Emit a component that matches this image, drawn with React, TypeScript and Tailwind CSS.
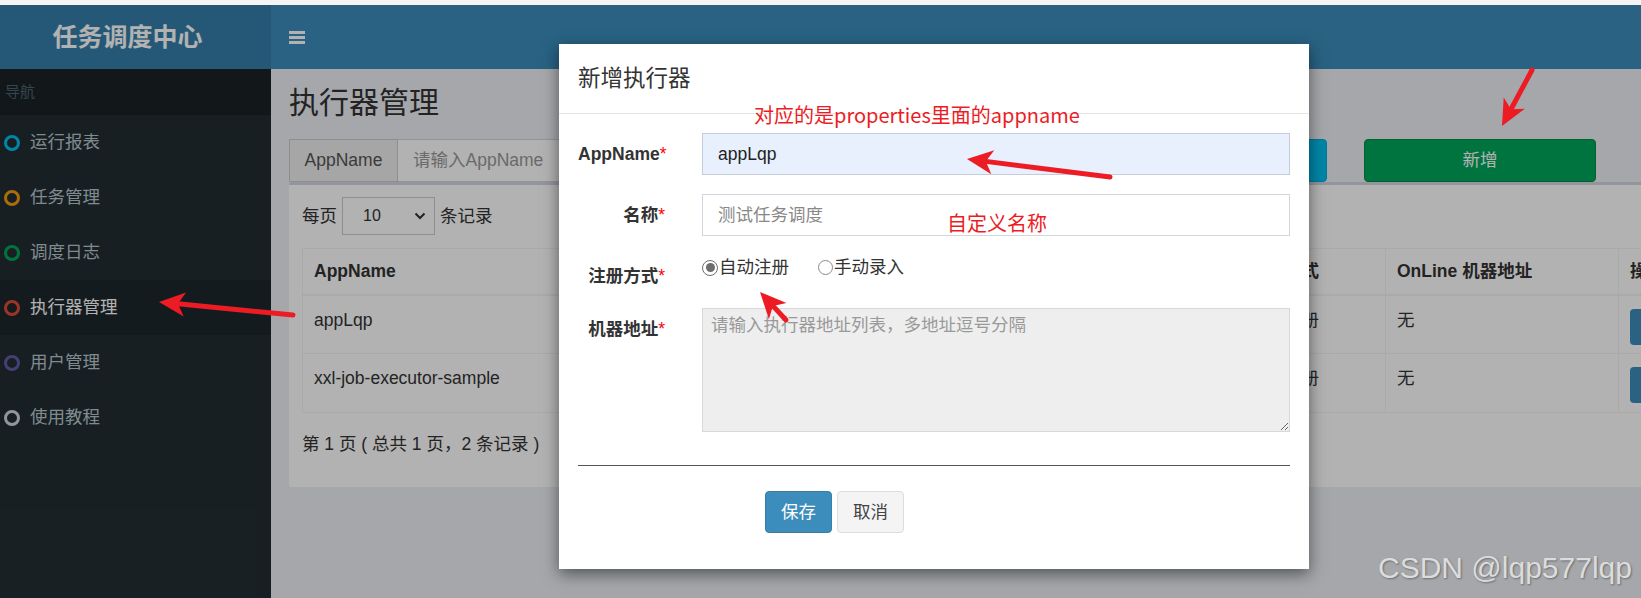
import React from "react";

const font = "font-['Liberation_Sans','Noto_Sans_CJK_SC',sans-serif]";

const navItems = [
  { label: "运行报表", ring: "border-[#00c0ef]" },
  { label: "任务管理", ring: "border-[#f39c12]" },
  { label: "调度日志", ring: "border-[#00a65a]" },
  { label: "执行器管理", ring: "border-[#dd4b39]", active: true },
  { label: "用户管理", ring: "border-[#605ca8]" },
  { label: "使用教程", ring: "border-[#d2d6de]" },
];

const rows = [
  { app: "appLqp", name: "测试任务调度" },
  { app: "xxl-job-executor-sample", name: "示例执行器" },
];

function Arrow({ x1, y1, x2, y2 }: { x1: number; y1: number; x2: number; y2: number }) {
  const dx = x2 - x1;
  const dy = y2 - y1;
  const len = Math.hypot(dx, dy);
  const ux = dx / len;
  const uy = dy / len;
  const hl = 26;
  const hw = 12;
  const bx = x2 - ux * hl;
  const by = y2 - uy * hl;
  const px = -uy;
  const py = ux;
  const nx = bx + ux * 7;
  const ny = by + uy * 7;
  const pts = `${x2},${y2} ${bx + px * hw},${by + py * hw} ${nx},${ny} ${bx - px * hw},${by - py * hw}`;
  return (
    <g>
      <line x1={x1} y1={y1} x2={nx} y2={ny} stroke="#ed1c24" strokeWidth={5} strokeLinecap="round" />
      <polygon points={pts} fill="#ed1c24" />
    </g>
  );
}

function Sidebar() {
  return (
    <div className="w-[271px] shrink-0 flex flex-col">
      <div className="h-[64px] bg-[#367fa9] flex items-center justify-center pr-[16px]">
        <span className="text-white text-[25px] font-bold leading-none">任务调度中心</span>
      </div>
      <div className="flex-1 bg-[#222d32]">
        <div className="h-[46px] bg-[#1a2226] flex items-center pl-[5px] text-[15px] text-[#4b646f]">导航</div>
        {navItems.map((n) => (
          <div
            key={n.label}
            className={`h-[55px] flex items-center pl-[4px] ${n.active ? "bg-[#1e282c] text-white" : "text-[#b8c7ce]"}`}
          >
            <span className={`w-[16px] h-[16px] rounded-full border-[3px] ${n.ring}`} />
            <span className="ml-[10px] text-[17.5px] leading-[25px]">{n.label}</span>
          </div>
        ))}
      </div>
    </div>
  );
}

function Main() {
  return (
    <div className="flex-1 flex flex-col overflow-hidden">
      <div className="h-[64px] bg-[#3c8dbc] flex items-center pl-[18px] shrink-0">
        <div className="flex flex-col gap-[2px]">
          <span className="block w-[16px] h-[3px] bg-white" />
          <span className="block w-[16px] h-[3px] bg-white" />
          <span className="block w-[16px] h-[3px] bg-white" />
        </div>
      </div>
      <div className="flex-1 bg-[#ecf0f5] px-[18px] pt-[19px]">
        <h1 className="text-[30px] leading-[30px] text-[#333]">执行器管理</h1>
        <div className="mt-[21px] h-[43px] flex">
          <div className="w-[371px] flex text-[17.5px]">
            <div className="w-[109px] border border-[#ccc] bg-[#eee] text-[#555] flex items-center justify-center">AppName</div>
            <div className="flex-1 border border-l-0 border-[#d2d6de] bg-white text-[#999] flex items-center pl-[15px]">请输入AppName</div>
          </div>
          <div className="ml-[571px] w-[96px] bg-[#00c0ef] rounded-[4px] border border-[#00acd6] text-white flex items-center justify-center text-[17.5px]">搜索</div>
          <div className="ml-[37px] w-[232px] bg-[#00a65a] rounded-[4px] border border-[#008d4c] text-white flex items-center justify-center text-[17.5px]">新增</div>
        </div>
        <div className="w-[1420px] h-[305px] bg-white border-t-[3px] border-[#d2d6de] rounded-[3px] px-[13px] pt-[12px] text-[17.5px] text-[#333]">
          <div className="flex items-center h-[38px]">
            <span>每页</span>
            <div className="ml-[5px] w-[93px] h-[38px] border border-[#ccc] flex items-center pl-[20px] pr-[8px] justify-between">
              <span className="text-[16px]">10</span>
              <svg width="12" height="8" viewBox="0 0 12 8">
                <path d="M1.5 1.5 L6 6 L10.5 1.5" fill="none" stroke="#333" strokeWidth="2" />
              </svg>
            </div>
            <span className="ml-[5px]">条记录</span>
          </div>
          <table className="mt-[13px] table-fixed border-collapse w-[1418px]">
            <colgroup>
              <col className="w-[458px]" />
              <col className="w-[477px]" />
              <col className="w-[148px]" />
              <col className="w-[233px]" />
              <col className="w-[102px]" />
            </colgroup>
            <thead>
              <tr className="h-[46px]">
                {["AppName", "名称", "注册方式", "OnLine 机器地址", "操作"].map((h) => (
                  <th key={h} className="border border-[#f4f4f4] border-b-2 px-[11px] text-left font-bold whitespace-nowrap">
                    {h}
                  </th>
                ))}
              </tr>
            </thead>
            <tbody>
              {rows.map((r) => (
                <tr key={r.app} className="h-[59px] align-top">
                  <td className="border border-[#f4f4f4] px-[11px] pt-[12px] leading-[25px]">{r.app}</td>
                  <td className="border border-[#f4f4f4] px-[11px] pt-[12px] leading-[25px]">{r.name}</td>
                  <td className="border border-[#f4f4f4] px-[11px] pt-[12px] leading-[25px]">自动注册</td>
                  <td className="border border-[#f4f4f4] px-[11px] pt-[12px] leading-[25px]">无</td>
                  <td className="border border-[#f4f4f4] px-[11px] pt-[13px]">
                    <div className="w-[80px] h-[36px] bg-[#3c8dbc] rounded-[4px]" />
                  </td>
                </tr>
              ))}
            </tbody>
          </table>
          <div className="mt-[19px] leading-[25px]">第 1 页 ( 总共 1 页，2 条记录 )</div>
        </div>
      </div>
    </div>
  );
}

function Label({ text }: { text: string }) {
  return (
    <label className="w-[87px] shrink-0 text-right font-bold pt-[9px] leading-[25px] whitespace-nowrap text-[#333]">
      {text}
      <span className="text-[#ff0000] font-normal">*</span>
    </label>
  );
}

function Modal() {
  return (
    <div className="absolute left-[559px] top-[44px] w-[750px] h-[525px] bg-white shadow-[0_5px_15px_rgba(0,0,0,0.5)] text-[17.5px] text-[#333]">
      <div className="h-[70px] border-b border-[#e5e5e5] px-[19px] flex items-center">
        <span className="text-[22.5px] leading-[32px] text-[#333]">新增执行器</span>
      </div>
      <div className="px-[19px] pt-[19px]">
        <div className="flex mb-[19px]">
          <Label text="AppName" />
          <div className="ml-[37px] flex-1 h-[42px] border border-[#c6cdd8] bg-[#e8f0fe] flex items-center px-[15px] text-[#222]">appLqp</div>
        </div>
        <div className="flex mb-[19px]">
          <Label text="名称" />
          <div className="ml-[37px] flex-1 h-[42px] border border-[#d2d6de] bg-white flex items-center px-[15px] text-[#888]">测试任务调度</div>
        </div>
        <div className="flex mb-[19px]">
          <Label text="注册方式" />
          <div className="ml-[37px] flex-1 flex items-start leading-[25px]">
            <div className="flex items-center">
              <span className="w-[16px] h-[16px] rounded-full border border-[#6d6d6d] flex items-center justify-center">
                <span className="w-[9px] h-[9px] rounded-full bg-[#6d6d6d]" />
              </span>
              <span className="ml-[1px]">自动注册</span>
            </div>
            <div className="flex items-center ml-[29px]">
              <span className="w-[15px] h-[15px] rounded-full border border-[#8a8a8a]" />
              <span className="ml-[1px]">手动录入</span>
            </div>
          </div>
        </div>
        <div className="flex">
          <Label text="机器地址" />
          <textarea
            readOnly
            placeholder="请输入执行器地址列表，多地址逗号分隔"
            className="ml-[37px] flex-1 h-[124px] border border-[#d8d8d8] bg-[#eee] px-[8px] py-[4px] leading-[25px] placeholder:text-[#999] outline-none"
          />
        </div>
        <div className="mt-[33px] h-px bg-[#555]" />
        <div className="mt-[25px] flex gap-[5px] pl-[187px]">
          <div className="w-[67px] h-[42px] bg-[#3c8dbc] border border-[#367fa9] rounded-[4px] text-white flex items-center justify-center">保存</div>
          <div className="w-[67px] h-[42px] bg-[#f4f4f4] border border-[#ddd] rounded-[4px] text-[#444] flex items-center justify-center">取消</div>
        </div>
      </div>
    </div>
  );
}

export default function App() {
  return (
    <div className={`relative w-[1641px] h-[598px] overflow-hidden bg-[#f5f5f5] ${font}`}>
      <div className="h-[5px] bg-[#f5f5f5]" />
      <div className="flex h-[593px]">
        <Sidebar />
        <Main />
      </div>
      <div className="absolute left-0 right-0 top-[5px] bottom-0 bg-black/30" />
      <Modal />
      <div className="absolute left-[754px] top-[102px] text-[20px] leading-[26px] text-[#ec1c24] font-['Noto_Sans_CJK_SC',sans-serif] whitespace-nowrap">
        对应的是properties里面的appname
      </div>
      <div className="absolute left-[947px] top-[210px] text-[20px] leading-[26px] text-[#ec1c24] font-['Noto_Sans_CJK_SC',sans-serif] whitespace-nowrap">
        自定义名称
      </div>
      <svg className="absolute left-0 top-0" width="1641" height="598">
        <Arrow x1={1110} y1={177} x2={967} y2={159} />
        <Arrow x1={293} y1={315} x2={159} y2={302} />
        <Arrow x1={1532} y1={70} x2={1502} y2={126} />
        <Arrow x1={786} y1={320} x2={760} y2={292} />
      </svg>
      <div className="absolute left-[1378px] top-[550px] text-[30px] leading-[36px] text-[#dcdcdc] [text-shadow:1px_1px_2px_rgba(0,0,0,0.35)] font-['Liberation_Sans',sans-serif] whitespace-nowrap">
        CSDN @lqp577lqp
      </div>
    </div>
  );
}
